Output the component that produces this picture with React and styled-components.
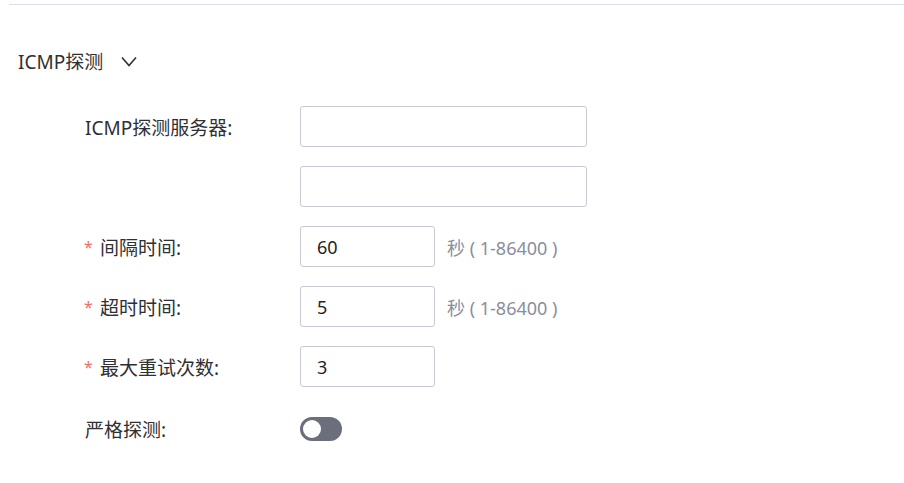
import React from "react";
import styled, { createGlobalStyle } from "styled-components";

const Global = createGlobalStyle`
  html, body { margin: 0; padding: 0; background: #fff; }
  body { font-family: "Noto Sans", "Noto Sans CJK SC", sans-serif; color: #303133; }
`;

const Page = styled.div`
  width: 904px;
  height: 483px;
  padding-top: 4px;
  box-sizing: border-box;
`;

const Divider = styled.div`
  margin-left: 9px;
  height: 1px;
  background: #dcdfe6;
`;

const SectionHeader = styled.div`
  margin: 44px 0 0 18px;
  height: 24px;
  display: flex;
  align-items: center;
  gap: 18px;
  font-size: 19px;
  color: #2f3034;
`;

const Form = styled.div`
  margin-top: 33px;
  padding-left: 84px;
  display: flex;
  flex-direction: column;
  gap: 19px;
`;

const Row = styled.div`
  display: flex;
  align-items: center;
  height: 41px;
  margin-top: ${(p) => p.$offset || 0}px;
`;

const Label = styled.div`
  width: 216px;
  font-size: 19px;
  color: #2f3034;
  display: flex;
  align-items: center;
  padding-left: ${(p) => (p.$required ? "0" : "1px")};
  box-sizing: border-box;
`;

const Star = styled.span`
  color: #f56c6c;
  width: 16px;
  font-size: 16px;
`;

const Input = styled.div`
  box-sizing: border-box;
  width: ${(p) => (p.$wide ? "287px" : "135px")};
  height: 41px;
  border: 1px solid #c8cad3;
  border-radius: 3px;
  padding-left: 16px;
  display: flex;
  align-items: center;
  font-size: 18px;
  color: #1f2329;
`;

const Unit = styled.span`
  margin-left: 12px;
  font-size: 18px;
  color: #8a8e9e;
`;

const Switch = styled.div`
  width: 42px;
  height: 24px;
  border-radius: 12px;
  background: #6b6e7b;
  display: flex;
  align-items: center;
  padding-left: 3px;
  box-sizing: border-box;
`;

const Knob = styled.div`
  width: 18px;
  height: 18px;
  border-radius: 50%;
  background: #fff;
`;

const Chevron = () => (
  <svg width="16" height="11" viewBox="0 0 16 11" fill="none">
    <path d="M1 1.5l7 8 7-8" stroke="#303133" strokeWidth="1.6" strokeLinejoin="miter" />
  </svg>
);

export default function App() {
  return (
    <Page>
      <Global />
      <Divider />
      <SectionHeader>
        <span>ICMP探测</span>
        <Chevron />
      </SectionHeader>
      <Form>
        <Row>
          <Label>ICMP探测服务器:</Label>
          <Input $wide />
        </Row>
        <Row>
          <Label />
          <Input $wide />
        </Row>
        <Row>
          <Label $required><Star>*</Star>间隔时间:</Label>
          <Input>60</Input>
          <Unit>秒 ( 1-86400 )</Unit>
        </Row>
        <Row>
          <Label $required><Star>*</Star>超时时间:</Label>
          <Input>5</Input>
          <Unit>秒 ( 1-86400 )</Unit>
        </Row>
        <Row>
          <Label $required><Star>*</Star>最大重试次数:</Label>
          <Input>3</Input>
        </Row>
        <Row $offset={2}>
          <Label>严格探测:</Label>
          <Switch><Knob /></Switch>
        </Row>
      </Form>
    </Page>
  );
}
